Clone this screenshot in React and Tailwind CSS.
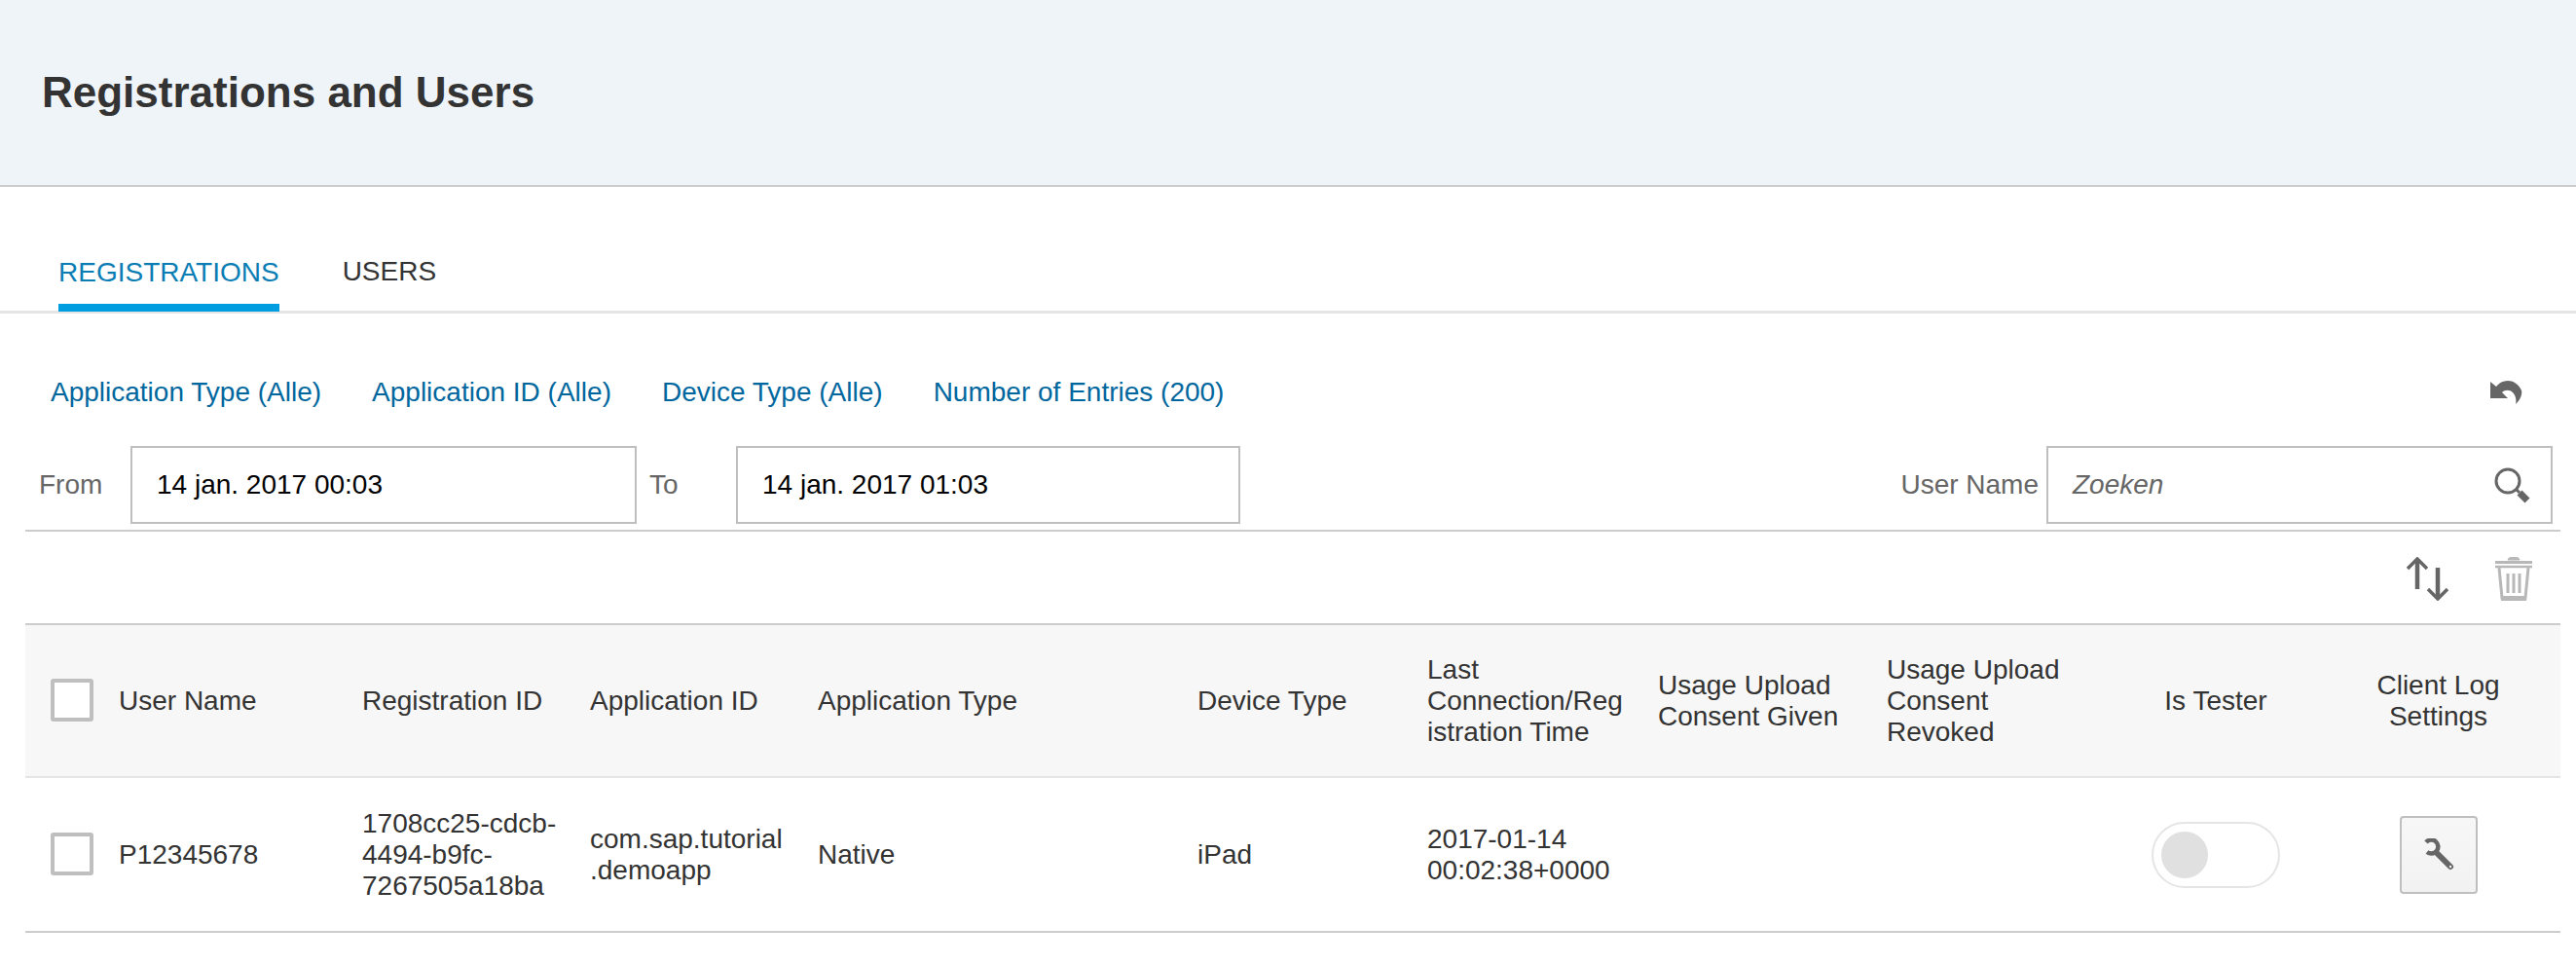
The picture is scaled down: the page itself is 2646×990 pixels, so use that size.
const FILTERS = ['Application Type (Alle)', 'Application ID (Alle)', 'Device Type (Alle)', 'Number of Entries (200)']

const COLS = 'grid grid-cols-[96px_250px_234px_234px_390px_236px_237px_235px_235px_206px_251px]'

const Checkbox = () => (
  <div className="w-[44px] h-[44px] ml-[26px] -mt-[2px] bg-white border-[4px] border-[#bfbfbf] rounded-[3px]" />
)

const UndoIcon = () => (
  <svg width="33" height="24" viewBox="0 0 33 24" fill="#666666">
    <path d="M0 1 L0 18 L18 18 L12 12 C15 9 20 9 23 12 C26 15 27 20 26 24 C31 20 33 13 32 10 C29 3 23 0 18 0 C13 0 9 2 6 6 Z" />
  </svg>
)

const SearchIcon = () => (
  <svg width="38" height="38" viewBox="0 0 38 38" fill="none" stroke="#666666">
    <circle cx="15" cy="15" r="12" strokeWidth="3" />
    <path d="M24 24 L27 27" strokeWidth="3" />
    <path d="M27 27 L35 35" strokeWidth="7" />
  </svg>
)

const SortIcon = () => (
  <svg width="44" height="45" viewBox="0 0 44 45" fill="none" stroke="#666666">
    <path d="M11 2 V33" strokeWidth="4.5" />
    <path d="M1 12 L11 2 L21 12" strokeWidth="3.5" />
    <path d="M32 11 V43" strokeWidth="4.5" />
    <path d="M22 33 L32 43 L42 33" strokeWidth="3.5" />
  </svg>
)

const TrashIcon = () => (
  <svg width="38" height="45" viewBox="0 0 38 45" fill="none" stroke="#b8b8b8">
    <path d="M13 3 C13 -1 25 -1 25 3 Z" fill="#b8b8b8" strokeWidth="1" />
    <path d="M0 5.5 H38" strokeWidth="3" />
    <path d="M0 10 H38" strokeWidth="2.5" />
    <path d="M4 11 L7 42 H31 L34 11" strokeWidth="3" />
    <path d="M6 42.5 H32" strokeWidth="5" />
    <path d="M13 17 V37 M19 17 V37 M25 17 V37" strokeWidth="3" />
  </svg>
)

const WrenchIcon = () => (
  <svg width="34" height="34" viewBox="0 0 34 34" fill="none" stroke="#666666">
    <path d="M4 4 A7 7 0 1 1 5 14" strokeWidth="4.5" />
    <path d="M15 15 L29 29" strokeWidth="6" strokeLinecap="round" />
    <circle cx="29" cy="29" r="1.2" fill="#f5f5f5" stroke="none" />
  </svg>
)

const DateInput = ({ value, width }) => (
  <div className={`${width} h-[80px] border-2 border-[#bfbfbf] flex items-center pl-[25px] text-black`}>
    {value}
  </div>
)

export default function App() {
  return (
    <div className="min-h-[990px] bg-white font-['Liberation_Sans',Arial,sans-serif] text-[28px] text-[#333333]">

      {/* Page header */}
      <div className="h-[192px] bg-[#eff4f9] border-b-2 border-[#cccccc] flex items-center pl-[43px]">
        <h1 className="text-[44px] font-bold text-[#333333]">Registrations and Users</h1>
      </div>

      {/* Tabs */}
      <div className="h-[130px] border-b-[3px] border-[#e5e5e5] flex items-end pl-[60px] gap-[65px]">
        <div className="h-[72px] border-b-[8px] border-[#009de0] -mb-[1px] text-[#0a7db5] leading-[64px]">REGISTRATIONS</div>
        <div className="h-[72px] leading-[64px]">USERS</div>
      </div>

      {/* Filters */}
      <div className="h-[136px] ml-[26px] mr-[16px] flex items-center justify-between pt-[26px] pl-[26px] pr-[39px]">
        <div className="flex gap-[52px] text-[#00679e]">
          {FILTERS.map(f => <span key={f}>{f}</span>)}
        </div>
        <UndoIcon />
      </div>

      {/* Date range and user search */}
      <div className="h-[88px] ml-[26px] mr-[16px] border-b-2 border-[#cccccc] flex text-[#666666]">
        <div className="flex items-center h-[80px]">
          <span className="ml-[14px] w-[94px]">From</span>
          <DateInput value="14 jan. 2017 00:03" width="w-[520px]" />
          <span className="ml-[13px] w-[89px]">To</span>
          <DateInput value="14 jan. 2017 01:03" width="w-[518px]" />
        </div>
        <div className="ml-auto flex items-center h-[80px] pr-[8px]">
          <span className="mr-[8px]">User Name</span>
          <div className="w-[520px] h-[80px] border-2 border-[#bfbfbf] flex items-center justify-between pl-[25px] pr-[21px]">
            <span className="italic">Zoeken</span>
            <SearchIcon />
          </div>
        </div>
      </div>

      {/* Table toolbar */}
      <div className="h-[94px] ml-[26px] mr-[16px] flex items-start justify-end pt-[26px] pr-[29px] gap-[47px]">
        <SortIcon />
        <TrashIcon />
      </div>

      {/* Table */}
      <div className="ml-[26px] mr-[16px]">
        <div className={`${COLS} h-[159px] bg-[#f7f7f7] border-y-2 border-t-[#cccccc] border-b-[#e5e5e5] items-center leading-[32px]`}>
          <Checkbox />
          <div>User Name</div>
          <div>Registration ID</div>
          <div>Application ID</div>
          <div>Application Type</div>
          <div>Device Type</div>
          <div>Last<br />Connection/Reg<br />istration Time</div>
          <div>Usage Upload<br />Consent Given</div>
          <div>Usage Upload<br />Consent<br />Revoked</div>
          <div className="text-center">Is Tester</div>
          <div className="text-center">Client Log<br />Settings</div>
        </div>

        <div className={`${COLS} h-[159px] border-b-2 border-[#cccccc] items-center leading-[32px]`}>
          <Checkbox />
          <div>P12345678</div>
          <div>1708cc25-cdcb-<br />4494-b9fc-<br />7267505a18ba</div>
          <div>com.sap.tutorial<br />.demoapp</div>
          <div>Native</div>
          <div>iPad</div>
          <div>2017-01-14<br />00:02:38+0000</div>
          <div />
          <div />
          <div className="flex justify-center">
            <div className="relative w-[132px] h-[68px] rounded-full border-2 border-[#e5e5e5] bg-white">
              <div className="absolute left-[8px] top-[8px] w-[48px] h-[48px] rounded-full bg-[#e0e0e0]" />
            </div>
          </div>
          <div className="flex justify-center">
            <button className="w-[80px] h-[80px] rounded-[4px] border-2 border-[#bfbfbf] bg-gradient-to-b from-[#f7f7f7] to-[#f2f2f2] flex items-center justify-center">
              <WrenchIcon />
            </button>
          </div>
        </div>
      </div>
    </div>
  )
}
